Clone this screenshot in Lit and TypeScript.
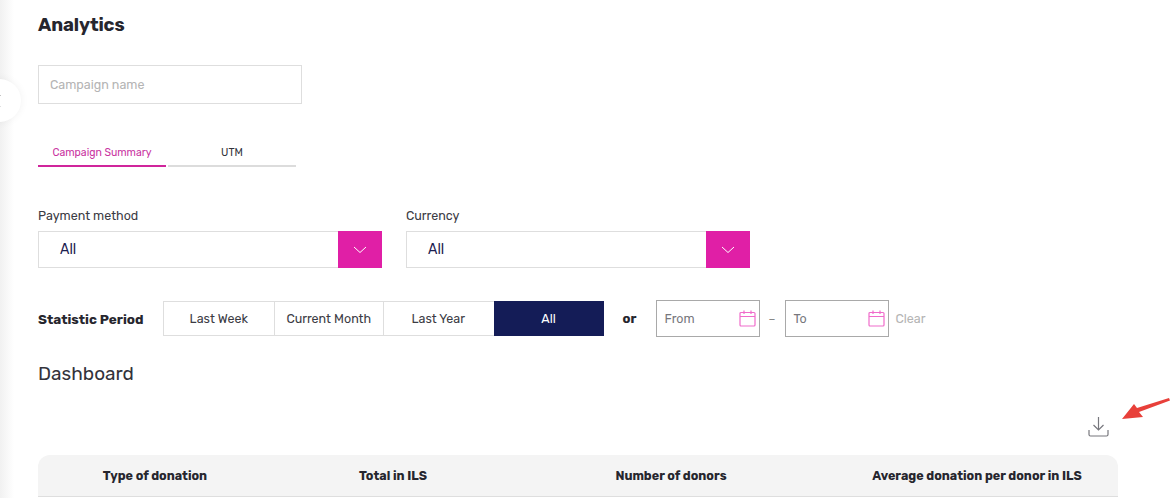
import { LitElement, html, css, svg } from "lit";
import { customElement } from "lit/decorators.js";

const chevron = html`<svg width="14" height="8" viewBox="0 0 14 8" fill="none" stroke="#fff" stroke-width="1"><path d="M1 1l6 5.5L13 1"/></svg>`;
const calendar = html`<svg class="cal" width="17" height="17" viewBox="0 0 17 17" fill="none" stroke="#f06ccb" stroke-width="1.2"><rect x="1" y="2.5" width="15" height="13.5" rx="1"/><path d="M1 6.5h15M5 .5v3.5M12 .5v3.5"/></svg>`;

@customElement("app-root")
export class AppRoot extends LitElement {
  static styles = css`
    :host { display: block; width: 1170px; height: 498px; overflow: hidden; position: relative; background: #fff; font-family: Rubik, Inter, "Noto Sans", sans-serif; color: #2b2b33; }
    .shade { position: absolute; left: 0; top: 0; bottom: 0; width: 14px; background: linear-gradient(90deg, #f1f1f1, #ffffff); }
    .toggle { position: absolute; left: -22px; top: 79px; width: 43px; height: 43px; border-radius: 50%; background: #fff; box-shadow: 0 0 8px rgba(0,0,0,.06); }
    .toggle svg { position: absolute; left: 19px; top: 15px; }
    .page { position: relative; padding: 14px 0 0 38px; box-sizing: border-box; }
    h1 { margin: 0; font-size: 18.5px; line-height: 22px; font-weight: 700; color: #26262e; letter-spacing: -.1px; }
    .search { margin-top: 29px; width: 264px; height: 39px; box-sizing: border-box; border: 1px solid #dedede; display: flex; align-items: center; padding-left: 11px; font-size: 12.5px; color: #b4b4b4; }
    .tabs { margin-top: 40px; display: flex; gap: 2px; width: 258px; font-size: 10.5px; }
    .tab { width: 128px; height: 23px; box-sizing: border-box; border-bottom: 2px solid #dcdcdc; text-align: center; line-height: 18px; color: #33333b; }
    .tab.on { color: #c9339f; border-bottom-color: #d0259c; }
    .selects { margin-top: 41px; display: flex; gap: 24px; }
    .field { width: 344px; }
    .field label { display: block; font-size: 12.5px; line-height: 16px; color: #3b3b44; margin-bottom: 7px; }
    .select { height: 37px; box-sizing: border-box; border: 1px solid #dedede; display: flex; align-items: center; justify-content: space-between; padding-left: 21px; font-size: 14px; color: #1c2050; }
    .arrow { width: 44px; height: 37px; margin: -1px -1px -1px 0; background: #e01fa6; display: flex; align-items: center; justify-content: center; }
    .period { margin-top: 32px; display: flex; align-items: center; height: 37px; }
    .period b { width: 125px; font-size: 13.5px; font-weight: 700; color: #26262e; }
    .seg { display: flex; height: 35px; box-sizing: border-box; border: 1px solid #dedede; font-size: 12.5px; color: #3b3b44; }
    .seg span { width: 109.5px; display: flex; align-items: center; justify-content: center; border-left: 1px solid #dedede; box-sizing: border-box; white-space: nowrap; }
    .seg span:first-child { border-left: 0; }
    .seg span.on { background: #141c57; color: #fff; border-left: 0; margin: -1px -1px -1px 1px; height: 35px; width: 110px; }
    .or { margin-left: 19px; width: 33px; font-size: 13px; font-weight: 700; color: #26262e; }
    .date { width: 104px; height: 37px; box-sizing: border-box; border: 1px solid #a9a9a9; display: flex; align-items: center; justify-content: space-between; padding: 0 3px 0 8px; font-size: 12.5px; color: #77777d; }
    .dash { width: 25px; text-align: center; color: #888; font-size: 12px; }
    .clear { margin-left: 7px; font-size: 12.5px; color: #b4b4b4; }
    h2 { margin: 25px 0 0; font-size: 19px; line-height: 23px; font-weight: 400; color: #33333b; }
    .tools { margin: 31px 52px 0 0; display: flex; justify-content: flex-end; height: 21px; padding-right: 9px; }
    .thead { margin-top: 18px; width: 1080px; height: 42px; box-sizing: border-box; background: #f4f4f4; border-radius: 12px 12px 0 0; border-bottom: 1px solid #dedede; display: grid; grid-template-columns: 234px 242px 314px 290px; align-items: center; font-size: 12.5px; font-weight: 700; color: #26262e; text-align: center; }
    .thead span:last-child { white-space: nowrap; padding-left: 8px; }
    .pointer { position: absolute; left: 1118px; top: 395px; }
  `;

  render() {
    return html`
      <div class="shade"></div>
      <div class="page">
        <h1>Analytics</h1>
        <div class="search">Campaign name</div>
        <div class="tabs"><div class="tab on">Campaign Summary</div><div class="tab">UTM</div></div>
        <div class="selects">
          <div class="field"><label>Payment method</label><div class="select">All<div class="arrow">${chevron}</div></div></div>
          <div class="field"><label>Currency</label><div class="select">All<div class="arrow">${chevron}</div></div></div>
        </div>
        <div class="period">
          <b>Statistic Period</b>
          <div class="seg"><span>Last Week</span><span>Current Month</span><span>Last Year</span><span class="on">All</span></div>
          <div class="or">or</div>
          <div class="date">From ${calendar}</div>
          <div class="dash">–</div>
          <div class="date">To ${calendar}</div>
          <div class="clear">Clear</div>
        </div>
        <h2>Dashboard</h2>
        <div class="tools">
          <svg width="21" height="21" viewBox="0 0 21 21" fill="none" stroke="#77777d" stroke-width="1.2"><path d="M10.5 1v13M5.5 9l5 5 5-5M1 14v4.5a1.5 1.5 0 0 0 1.5 1.5h16a1.5 1.5 0 0 0 1.5-1.5V14"/></svg>
        </div>
        <div class="thead"><span>Type of donation</span><span>Total in ILS</span><span>Number of donors</span><span>Average donation per donor in ILS</span></div>
      </div>
      <div class="toggle"><svg width="4" height="14" viewBox="0 0 4 14" fill="none" stroke="#333" stroke-width="1"><path d="M3 1L.5 7 3 13" stroke-dasharray="2 1.5"/></svg></div>
      <svg class="pointer" width="52" height="30" viewBox="0 0 52 30"><path d="M52 5.5L21 17l4 5-21 2 12-15 3 4L51 3z" fill="#e8403a"/></svg>
    `;
  }
}
